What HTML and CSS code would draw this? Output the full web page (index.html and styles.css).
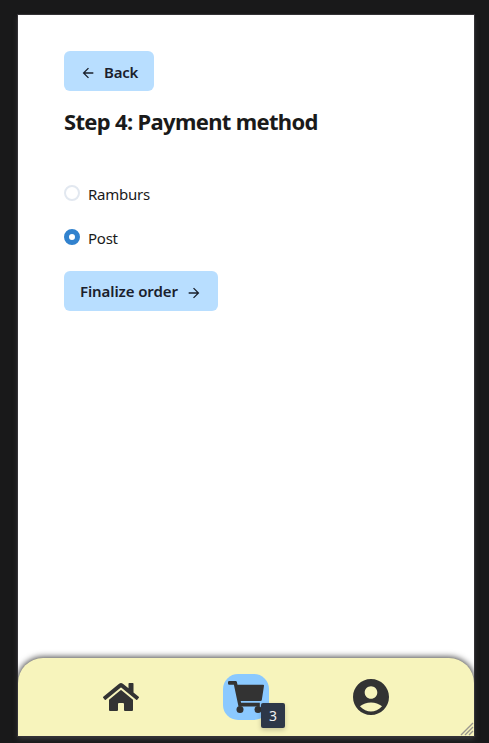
FILE: index.html
```html
<!DOCTYPE html>
<html lang="en">
<head>
<meta charset="utf-8">
<title>Payment method</title>
<link rel="stylesheet" href="styles.css">
</head>
<body>
<div class="screen">
  <main class="content">
    <button class="btn back"><svg class="arrow" viewBox="0 0 24 24"><path d="M20 11H7.83l5.59-5.59L12 4l-8 8 8 8 1.41-1.41L7.83 13H20v-2z"/></svg><span class="back-text">Back</span></button>
    <h1>Step 4: Payment method</h1>
    <div class="options">
      <label class="option"><input type="radio" name="pay"><span>Ramburs</span></label>
      <label class="option"><input type="radio" name="pay" checked><span>Post</span></label>
    </div>
    <button class="btn finalize"><span class="finalize-text">Finalize order</span><svg class="arrow" viewBox="0 0 24 24"><path d="M12 4l-1.410 1.410L16.170 11H4v2h12.170l-5.580 5.590L12 20l8-8z"/></svg></button>
  </main>
  <nav class="tabbar">
    <a class="tab"><svg class="home" viewBox="0 0 576 512"><path d="M280.37 148.26L96 300.11V464a16 16 0 0 0 16 16l112.06-.29a16 16 0 0 0 15.92-16V368a16 16 0 0 1 16-16h64a16 16 0 0 1 16 16v95.64a16 16 0 0 0 16 16.05L464 480a16 16 0 0 0 16-16V300L295.67 148.26a12.19 12.19 0 0 0-15.3 0zM571.6 251.47L488 182.56V44.05a12 12 0 0 0-12-12h-56a12 12 0 0 0-12 12v72.61L318.47 43a48 48 0 0 0-61 0L4.34 251.47a12 12 0 0 0-1.6 16.9l25.5 31A12 12 0 0 0 45.15 301l235.22-193.74a12.19 12.19 0 0 1 15.3 0L530.9 301a12 12 0 0 0 16.9-1.6l25.5-31a12 12 0 0 0-1.7-16.93z"/></svg></a>
    <a class="tab active"><svg class="cart" viewBox="0 0 36 36"><path d="M1.200 2H7.700Q8.700 2 8.900 3L9.500 5.800H35.300Q36.200 5.800 36 6.800L33.800 20.900Q33.600 22 32.500 22H12.700L13.100 23.700H31.800V27.500H10.500L5.900 5.800H1.200Q0 5.800 0 4.600V3.200Q0 2 1.200 2z"/><circle cx="12" cy="30.500" r="3.500"/><circle cx="30" cy="30.500" r="3.500"/></svg><span class="badge">3</span></a>
    <a class="tab"><svg class="user" viewBox="2 2 20 20"><path d="M12 2C6.480 2 2 6.480 2 12s4.480 10 10 10 10-4.480 10-10S17.520 2 12 2zm0 4c1.930 0 3.500 1.570 3.500 3.500S13.930 13 12 13s-3.500-1.570-3.500-3.500S10.070 6 12 6zm0 14c-2.030 0-4.430-.82-6.140-2.880C7.550 15.800 9.680 15 12 15s4.450.8 6.140 2.120C16.430 19.180 14.030 20 12 20z"/></svg></a>
    <svg class="grip" viewBox="0 0 14 14"><path d="M1 13L13 1M5 13l8-8M9 13l4-4"/></svg>
  </nav>
</div>
</body>
</html>
```
FILE: styles.css
```css
* { box-sizing: border-box; }
body {
  margin: 0;
  height: 743px;
  padding: 15px 15px 7px 18px;
  background: #19191a;
  font-family: "Noto Sans", "Open Sans", sans-serif;
  color: #1a1a1a;
  overflow: hidden;
}
.screen {
  height: 721px;
  display: flex;
  flex-direction: column;
  background: #fff;
  box-shadow: 0 0 0 1px #343236, 0 3px 5px #3a3a3c;
}
.content {
  flex: 1;
  padding: 36px 46px 0;
  display: flex;
  flex-direction: column;
  align-items: flex-start;
}
.btn {
  height: 40px;
  padding: 0 16px;
  border: 0;
  border-radius: 6px;
  background: #b8deff;
  color: #1a202c;
  font: 600 15px/24px "Noto Sans", sans-serif;
  display: flex;
  align-items: center;
  gap: 8px;
  white-space: nowrap;
}
.back { width: 90px; padding-top: 3px; }
.back-text { letter-spacing: -.2px; margin-top: -2px; }
.finalize { width: 154px; }
.finalize-text { width: 98px; letter-spacing: -.1px; text-align: left; }
.arrow { width: 16px; height: 16px; fill: currentColor; flex: none; }
.finalize .arrow { margin-top: 3px; }
h1 {
  margin: 13px 0 0;
  font-size: 22px;
  line-height: 34px;
  font-weight: 700;
  letter-spacing: -.67px;
  white-space: nowrap;
}
.options { margin-top: 44px; }
.option {
  display: flex;
  align-items: center;
  gap: 8px;
  height: 24px;
  margin-bottom: 20px;
  font-size: 15px;
  line-height: 24px;
  letter-spacing: -.25px;
}
.option:last-child { margin-bottom: 21px; }
.option input {
  appearance: none;
  width: 16px;
  height: 16px;
  margin: 0 0 3px;
  border: 2px solid #e2e8f0;
  border-radius: 50%;
}
.option input:checked {
  border: 5px solid #3182ce;
}
.tabbar {
  position: relative;
  height: 78px;
  padding: 0 40px;
  background: #f7f4bc;
  border-radius: 25px 25px 0 0;
  box-shadow: 0 0 6px 1px #444;
  clip-path: inset(-12px 0 0 0);
  display: flex;
  align-items: center;
  justify-content: space-around;
}
.tab {
  position: relative;
  width: 46px;
  height: 46px;
  border-radius: 15px;
  display: flex;
  align-items: center;
  justify-content: center;
}
.tab svg { width: 36px; height: 36px; fill: #333; }
.active { background: #8bc9ff; }
.badge {
  position: absolute;
  left: 38px;
  top: 29px;
  width: 24px;
  height: 25px;
  border-radius: 2px;
  background: #2d3748;
  color: #f0f0f0;
  font-size: 14px;
  line-height: 26px;
  text-align: center;
  box-shadow: 0 2px 5px rgba(0,0,0,.2);
}
.grip {
  position: absolute;
  right: 0;
  bottom: 0;
  width: 14px;
  height: 14px;
  stroke: #9a978e;
  stroke-width: 1.4;
}
```
